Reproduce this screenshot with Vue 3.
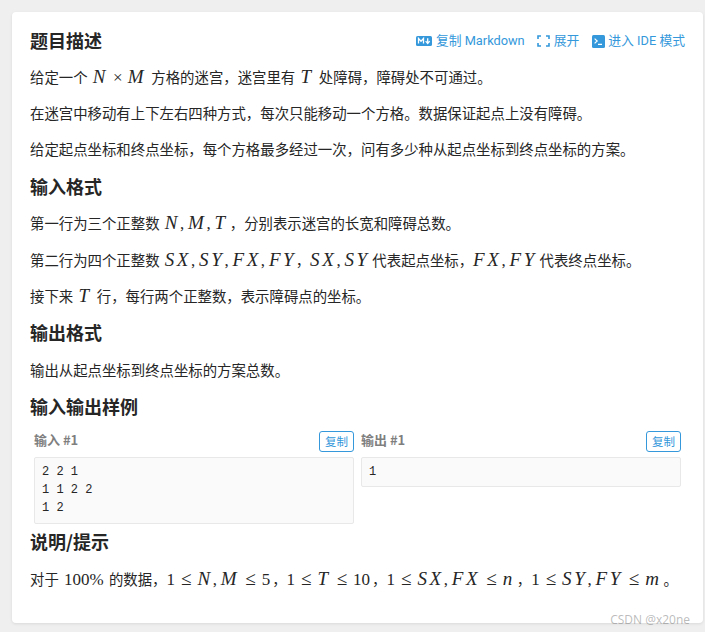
<template>
  <div class="page">
    <section class="card">
      <header class="title-row">
        <h2>题目描述</h2>
        <nav class="actions">
          <a class="action">
            <svg viewBox="0 0 16 10" width="16" height="10">
              <rect width="16" height="10" rx="1.5" fill="#3498db" />
              <path d="M2.5 7.5V2.5L5 5.2 7.5 2.5V7.5" fill="none" stroke="#fff" stroke-width="1.3" />
              <path d="M11.7 2.3V7M9.7 5.2L11.7 7.6 13.7 5.2" fill="none" stroke="#fff" stroke-width="1.3" />
            </svg>
            复制 Markdown
          </a>
          <a class="action">
            <svg viewBox="0 0 13 12" width="13" height="12">
              <path d="M1 4V1H4M9 1H12V4M12 8V11H9M4 11H1V8" fill="none" stroke="#3498db" stroke-width="1.6" />
            </svg>
            展开
          </a>
          <a class="action">
            <svg viewBox="0 0 13 13" width="13" height="13">
              <rect width="13" height="13" rx="1.5" fill="#3498db" />
              <path d="M2.6 3.6L5.2 6 2.6 8.4M6 9.4H10" fill="none" stroke="#fff" stroke-width="1.2" />
            </svg>
            进入 IDE 模式
          </a>
        </nav>
      </header>
      <p>给定一个 <span class="math"><i>N</i><b class="op">×</b><i>M</i></span> 方格的迷宫，迷宫里有 <span class="math"><i>T</i></span> 处障碍，障碍处不可通过。</p>
      <p>在迷宫中移动有上下左右四种方式，每次只能移动一个方格。数据保证起点上没有障碍。</p>
      <p>给定起点坐标和终点坐标，每个方格最多经过一次，问有多少种从起点坐标到终点坐标的方案。</p>
      <h2>输入格式</h2>
      <p>第一行为三个正整数 <span class="math"><i>N</i><b class="c">,</b><i>M</i><b class="c">,</b><i>T</i></span>，分别表示迷宫的长宽和障碍总数。</p>
      <p>第二行为四个正整数 <span class="math"><i>SX</i><b class="c">,</b><i>SY</i><b class="c">,</b><i>FX</i><b class="c">,</b><i class="s">FY</i></span>，<span class="math tight"><i>SX</i><b class="c">,</b><i class="s">SY</i></span> 代表起点坐标，<span class="math tight"><i>FX</i><b class="c">,</b><i class="s">FY</i></span> 代表终点坐标。</p>
      <p>接下来 <span class="math"><i>T</i></span> 行，每行两个正整数，表示障碍点的坐标。</p>
      <h2>输出格式</h2>
      <p>输出从起点坐标到终点坐标的方案总数。</p>
      <h2>输入输出样例</h2>
      <div class="samples">
        <div v-for="s in samples" :key="s.label">
          <div class="sample-head">
            <span class="label">{{ s.label }}</span>
            <button class="copy">复制</button>
          </div>
          <pre class="code">{{ s.code }}</pre>
        </div>
      </div>
      <h2 class="hint">说明/提示</h2>
      <p>对于 <span class="math"><b>100%</b></span> 的数据，<span class="math tight"><b>1</b><b class="le">≤</b><i>N</i><b class="c">,</b><i>M</i><b class="le">≤</b><b>5</b></span>，<span class="math tight"><b>1</b><b class="le">≤</b><i>T</i><b class="le">≤</b><b>10</b></span>，<span class="math tight"><b>1</b><b class="le">≤</b><i>SX</i><b class="c">,</b><i>FX</i><b class="le">≤</b><i>n</i></span>，<span class="math tight"><b>1</b><b class="le">≤</b><i>SY</i><b class="c">,</b><i>FY</i><b class="le">≤</b><i>m</i></span>。</p>
      <span class="mark">CSDN @x20ne</span>
    </section>
  </div>
</template>

<script setup>
const samples = [
  { label: '输入 #1', code: '2 2 1\n1 1 2 2\n1 2' },
  { label: '输出 #1', code: '1' }
]
</script>

<style>
html, body { margin: 0; background: #efefef; }
</style>

<style scoped>
.page {
  height: 632px;
  box-sizing: border-box;
  padding: 12px 2px 9px 12px;
  background: #efefef;
  font-family: "Noto Sans CJK SC", "Noto Sans", sans-serif;
  color: #262626;
  overflow: hidden;
}
.card {
  position: relative;
  height: 100%;
  box-sizing: border-box;
  padding: 17px 18px;
  background: #fff;
  border-radius: 4px;
  box-shadow: 0 1px 3px rgba(26, 26, 26, 0.1);
}
.title-row { display: flex; justify-content: space-between; align-items: flex-start; }
h2 { margin: 0; padding-bottom: 2px; font-size: 18px; line-height: 22px; font-weight: 700; color: #262626; }
p { margin: 13.8px 0; font-size: 14.4px; line-height: 22.4px; white-space: nowrap; }
.title-row + p { margin-top: 13px; }
.actions { display: flex; gap: 12.5px; font: 12.8px/24px Roboto, "Noto Sans CJK SC", sans-serif; color: #3498db; }
.action { display: flex; align-items: center; gap: 3.5px; white-space: nowrap; }
.math { margin: 0 2px; font-family: "Liberation Serif", serif; font-size: 17px; line-height: 0; }
.math.tight { margin-left: 0; }
.math i { font-size: 19px; letter-spacing: 2.6px; }
.math i.s { margin-right: -2.6px; }
.math b { font-weight: 400; }
.math .op { margin: 0 5px; }
.math .le { margin: 0 6px; font-size: 19px; }
.math .c { margin-right: 3.8px; }
.samples { display: grid; grid-template-columns: 320px 320px; column-gap: 7px; padding: 0 4px; margin-top: 11.5px; align-items: start; }
.sample-head { display: flex; justify-content: space-between; align-items: flex-start; height: 21px; margin-bottom: 5px; }
.label { font-size: 13px; line-height: 18px; font-weight: 700; color: #7f7f7f; }
.copy {
  box-sizing: border-box;
  width: 35px;
  height: 21px;
  padding: 0;
  border: 1px solid #3498db;
  border-radius: 3px;
  background: #fff;
  color: #3498db;
  font: 11.5px "Noto Sans CJK SC", sans-serif;
}
.code {
  margin: 0;
  padding: 5px 7px;
  border: 1px solid #e8e8e8;
  border-radius: 2px;
  background: #fafafa;
  font: 12px/18.4px "Liberation Mono", monospace;
  color: #262626;
}
.hint { margin-top: 6px; }
.hint + p { margin-top: 14px; }
.mark {
  position: absolute;
  right: 13px;
  bottom: -5px;
  font: 12px "Open Sans", sans-serif;
  color: rgba(130, 130, 130, 0.55);
}
</style>
